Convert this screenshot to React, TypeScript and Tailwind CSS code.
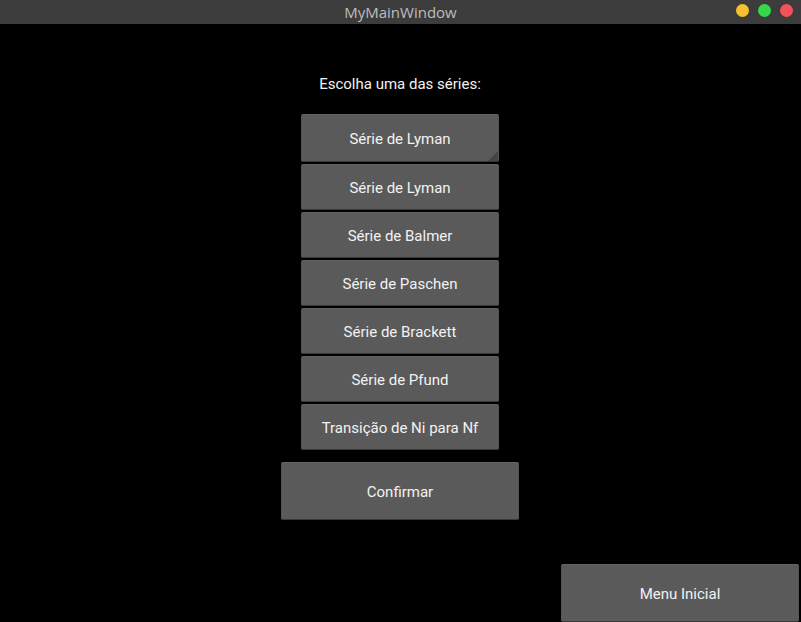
import React from "react";

const series = [
  "Série de Lyman",
  "Série de Balmer",
  "Série de Paschen",
  "Série de Brackett",
  "Série de Pfund",
  "Transição de Ni para Nf",
];

const btn =
  "flex items-center justify-center pt-[2px] bg-[#5a5a5a] text-[#f2f2f2] text-[15px] border border-[#555555] border-t-[#636363] border-b-[#3a3a3a] rounded-[2px]";

export default function App() {
  return (
    <div className="w-[801px] h-[622px] bg-black overflow-hidden font-['Roboto',sans-serif]">
      {/* Title bar */}
      <div className="relative h-6 bg-[#3c3c3c] flex items-center justify-center">
        <span className="text-[15px] text-[#bdbdbd] font-['Open_Sans',sans-serif]">
          MyMainWindow
        </span>
        <div className="absolute right-[8px] top-[4px] flex gap-[9px]">
          <span className="w-[13px] h-[13px] rounded-full bg-[#f6c030]" />
          <span className="w-[13px] h-[13px] rounded-full bg-[#36d84a]" />
          <span className="w-[13px] h-[13px] rounded-full bg-[#f1525b]" />
        </div>
      </div>

      {/* Body */}
      <div className="w-[800px] h-[598px] flex flex-col items-center">
        <p className="mt-[50px] h-5 leading-5 text-[15px] text-[#f2f2f2]">
          Escolha uma das séries:
        </p>

        <div className="mt-[20px] flex flex-col gap-[2px]">
          <div className={`${btn} relative w-[198px] h-[48px]`}>
            Série de Lyman
            <span className="absolute right-0 bottom-0 w-0 h-0 border-l-[10px] border-l-transparent border-b-[10px] border-b-[#444444]" />
          </div>
          {series.map((s) => (
            <div key={s} className={`${btn} w-[198px] h-[46px]`}>
              {s}
            </div>
          ))}
        </div>

        <div className={`${btn} mt-[12px] w-[238px] h-[58px]`}>Confirmar</div>

        <div className={`${btn} self-end mt-[44px] mr-[1px] w-[238px] h-[58px] shrink-0`}>
          Menu Inicial
        </div>
      </div>
    </div>
  );
}
